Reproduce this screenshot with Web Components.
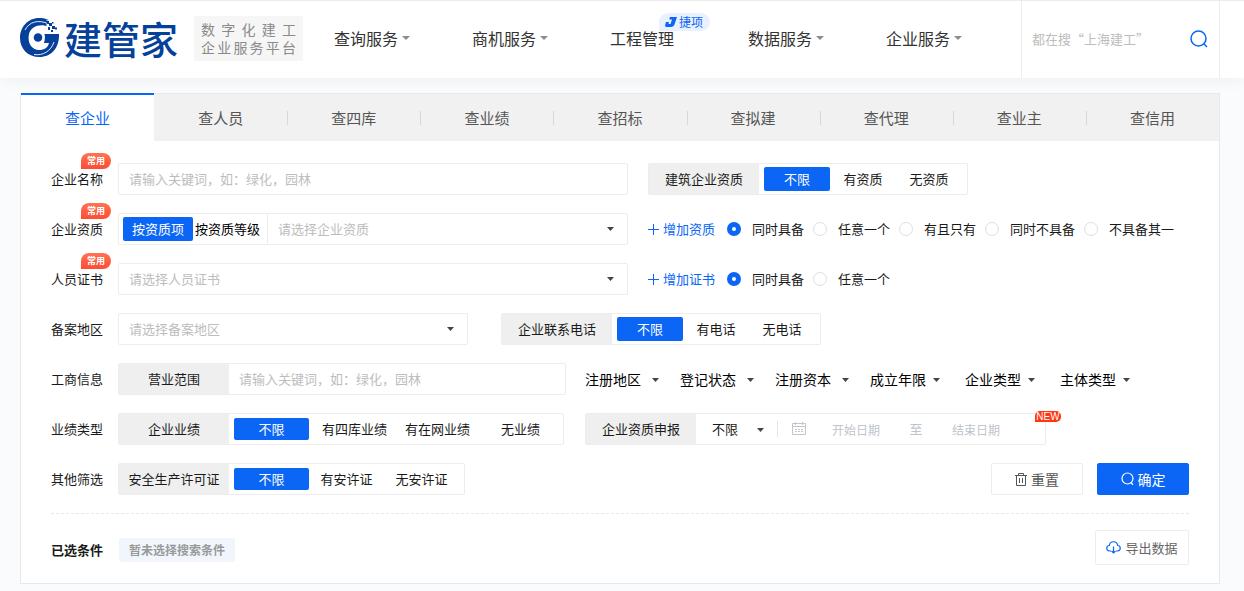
<!DOCTYPE html>
<html lang="zh-CN">
<head>
<meta charset="utf-8">
<title>建管家</title>
<style>
  body { margin: 0; background: #fafbfd; color: #1a1a1a; font: 13px/20px "Noto Sans CJK SC", sans-serif; --blue: #0b66f5; --line: #ededed; --hint: #bdbdbd; }
</style>
</head>
<body>
<site-header></site-header>
<search-panel></search-panel>

<script>
const base = `
  *, *::before { box-sizing: border-box; }
  button, input, select { font: inherit; color: inherit; margin: 0; padding: 0; border: 0; background: none; outline: none; border-radius: 0; }
  select { appearance: none; }
  button { cursor: pointer; }
  a { color: inherit; text-decoration: none; }
  input::placeholder { color: var(--hint); opacity: 1; }
  svg { display: block; flex: none; }
`;
const caret = (w = 7, h = 4) => `<svg width="${w}" height="${h}" viewBox="0 0 8 4" preserveAspectRatio="none" aria-hidden="true"><path d="M0 0H8L4 4Z" fill="currentColor"/></svg>`;

function define(name, css, html) {
  customElements.define(name, class extends HTMLElement {
    constructor() {
      super();
      this.attachShadow({ mode: 'open' });
    }
    connectedCallback() {
      this.shadowRoot.innerHTML = `<style>${base}${css}</style>${typeof html === 'function' ? html(this) : html}`;
    }
  });
}
const list = (el, name) => (el.getAttribute(name) || '').split(' ').filter(Boolean);

/* Brand mark and wordmark */
define('brand-logo', `
  :host { display: block; flex: none; }
  a { display: flex; align-items: center; gap: 4px; color: #05409a; font-size: 38px; line-height: 40px; font-weight: 500; white-space: nowrap; }
`, `
  <a href="#">
    <svg width="40" height="40" viewBox="0 0 40 40" aria-hidden="true">
      <path fill="currentColor" d="M39 16C39.6 30 31 39 19.5 39C8 39 0 31 0 20C0 9 8 0 19 0C25 0 30 2 33 5L29 9C21 5 11 8 9 16C7 25 12 32 19 32C24.5 32 28 29.500 29 25H24C25 22 25.200 19 24.500 16Z"/>
      <circle cx="18" cy="19.500" r="4.300" fill="currentColor"/>
      <path fill="none" stroke="#fff" stroke-width=".9" d="M5 12C9 4 18 1 29 6M14 36.500C23 38 31 33 34 24"/>
      <path fill="#fff" d="M26 2H34V12H27Z"/>
      <path fill="currentColor" d="M25 2L29 3V6H27ZM29 5h3v3h-3zM32 8h3v3h-3zM28 9h2v3h-2zM35 9.500h2v2h-2zM31 12h2v2h-2zM32 4h1.500v1.500h-1.500z"/>
    </svg>
    <span>建管家</span>
  </a>
`);

define('nav-item', `
  :host { display: flex; position: relative; align-items: center; }
  a { display: flex; align-items: center; gap: 4px; font-size: 16px; line-height: 24px; color: #333; }
  svg { color: #8c8c8c; }
  ::slotted(*) { position: absolute; left: 49px; bottom: 44px; }
`, el => `<a href="#">${el.getAttribute('label')}${el.hasAttribute('plain') ? '' : caret(8, 4)}</a><slot></slot>`);

define('product-badge', `
  :host { display: flex; align-items: center; gap: 2px; height: 18px; padding: 0 7px 0 6px; border-radius: 9px 9px 9px 0; background: #e9f1fe; color: var(--blue); font-size: 12px; line-height: 18px; white-space: nowrap; }
`, `
  <svg width="12" height="10" viewBox="0 0 12 10" aria-hidden="true"><path fill="currentColor" d="M5 0H12L9.500 7.500C8.800 9.500 7 10 5 10H1.500C0 10 0 8.500 .3 7.500L1 5H4L3.500 7H5.500L7 2.500H4.200Z"/></svg>
  <slot></slot>
`);

define('site-header', `
  :host { display: block; position: relative; background: #fff; border-top: 1px solid #ebebeb; box-shadow: 0 2px 15px rgba(0,0,0,.05); }
  header { display: flex; align-items: center; margin: 0 24px 0 20px; height: 77px; }
  brand-logo { margin-bottom: 3px; }
  .tagline { flex: none; width: 109px; margin: 0 31px 2px 16px; padding: 4px 7px 5px; background: #f6f6f6; color: #8a8a8a; font-size: 14px; line-height: 18px; text-align-last: justify; }
  nav { flex: 1; min-width: 0; align-self: stretch; display: grid; grid-template-columns: repeat(5, 138px); padding-bottom: 3px; }
  form { display: flex; align-items: center; align-self: stretch; flex: none; width: 199px; padding: 0 10px 2px; border: solid var(--line); border-width: 0 1px; }
  input { flex: 1; min-width: 0; height: 32px; }
  form button { display: flex; color: var(--blue); }
`, `
  <header>
    <brand-logo></brand-logo>
    <div class="tagline"><div>数 字 化 建 工</div><div>企业服务平台</div></div>
    <nav>
      <nav-item label="查询服务"></nav-item>
      <nav-item label="商机服务"></nav-item>
      <nav-item label="工程管理" plain><product-badge>捷项</product-badge></nav-item>
      <nav-item label="数据服务"></nav-item>
      <nav-item label="企业服务"></nav-item>
    </nav>
    <form role="search">
      <input type="text" aria-label="搜索" placeholder="都在搜“上海建工”">
      <button type="button" aria-label="搜索"><svg width="20" height="20" viewBox="0 0 20 20" fill="none" stroke="currentColor" stroke-width="1.500"><circle cx="9.500" cy="9.500" r="7.500"/><path d="M14.800 14.800L18 18"/></svg></button>
    </form>
  </header>
`);

define('tab-bar', `
  :host { display: flex; height: 47px; background: #f1f1f1; }
  button { position: relative; flex: 1; padding-top: 1px; font-size: 15px; color: #555; }
  button[aria-selected=true] { margin-top: -1px; border-top: 2px solid var(--blue); background: #fff; color: var(--blue); padding-top: 0; }
  button + button + button::before { content: ""; position: absolute; left: 0; top: 17px; height: 14px; border-left: 1px solid #d8d8d8; }
`, el => list(el, 'tabs').map((t, i) => `<button type="button" role="tab" aria-selected="${i === 0}">${t}</button>`).join(''));

/* One line of the filter form: a caption, then its controls */
define('filter-row', `
  :host { display: flex; align-items: center; height: 50px; }
  .caption { position: relative; width: 67px; flex: none; }
  .hot { position: absolute; left: 30px; top: -16px; width: 30px; height: 16px; border-radius: 8px 8px 8px 0; background: linear-gradient(#ff7350, #ff4b35); color: #fff; font-size: 9px; line-height: 15px; font-weight: 700; text-align: center; }
`, el => `<div class="caption">${el.getAttribute('label')}${el.hasAttribute('hot') ? '<span class="hot">常用</span>' : ''}</div><slot></slot>`);

const field = `
  :host { display: flex; height: 32px; border: 1px solid var(--line); border-radius: 2px; background: #fff; }
  .tag { display: flex; align-items: center; justify-content: center; width: 110px; flex: none; background: #efefef; }
`;

define('text-field', `${field}
  input { flex: 1; min-width: 0; padding: 0 10px; }
`, el => `${el.hasAttribute('tag') ? `<label class="tag" for="f">${el.getAttribute('tag')}</label>` : ''}<input id="f" type="text" aria-label="关键词" placeholder="${el.getAttribute('hint')}">`);

define('select-field', `${field}
  :host { align-items: center; }
  select { flex: 1; min-width: 0; height: 30px; padding: 0 10px; color: var(--hint); }
  svg { margin-right: 13px; color: #444; }
`, el => `<slot></slot><select aria-label="${el.getAttribute('hint')}"><option>${el.getAttribute('hint')}</option></select>${caret(7, 4)}`);

define('mode-switch', `
  :host { display: flex; align-items: center; height: 30px; padding: 0 5px 0 4px; border-right: 1px solid var(--line); color: #000; }
  button { height: 24px; padding: 0 2px; white-space: nowrap; }
  button[aria-pressed=true] { width: 70px; border-radius: 2px; background: var(--blue); color: #fff; }
`, `<button type="button" aria-pressed="true">按资质项</button><button type="button" aria-pressed="false">按资质等级</button>`);

define('option-group', `${field}
  :host { --w: 66px; --h: 24px; --gap: 0px; }
  :host([wide]) { --w: 75px; --h: 22px; }
  :host([spaced]) { --gap: 8px; }
  .options { display: flex; align-items: center; gap: var(--gap); padding: 0 5px; }
  button { width: var(--w); height: var(--h); border-radius: 2px; white-space: nowrap; }
  button[aria-pressed=true] { background: var(--blue); color: #fff; }
`, el => `<div class="tag">${el.getAttribute('tag')}</div><div class="options">${list(el, 'options').map((o, i) => `<button type="button" aria-pressed="${i === 0}">${o}</button>`).join('')}</div>`);

define('add-link', `
  :host { display: block; margin-right: 12px; }
  button { display: flex; align-items: center; gap: 4px; color: var(--blue); white-space: nowrap; }
`, `<button type="button"><svg width="11" height="11" viewBox="0 0 11 11" stroke="currentColor" aria-hidden="true"><path d="M5.500 0V11M0 5.500H11"/></svg><slot></slot></button>`);

define('radio-set', `
  :host { display: flex; gap: 9px; }
  label { display: flex; align-items: center; gap: 11px; white-space: nowrap; }
  input { appearance: none; width: 14px; height: 14px; border: 1px solid #dcdfe6; border-radius: 50%; background: #fff; }
  input:checked { border: 5px solid var(--blue); }
`, el => list(el, 'options').map((o, i) => `<label><input type="radio" name="r" ${i === 0 ? 'checked' : ''}>${o}</label>`).join(''));

define('menu-select', `
  :host { display: flex; align-items: center; gap: 6px; width: 95px; color: #000; font-size: 14px; }
  :host([spaced]) { gap: 10px; }
  select { width: 57px; height: 22px; }
  svg { margin-top: 2px; color: #444; }
`, el => `<select aria-label="${el.getAttribute('label')}"><option>${el.getAttribute('label')}</option></select>${caret(7, 4)}`);

define('report-filter', `${field}
  :host { position: relative; align-items: center; width: 461px; --hint: #c0c4cc; }
  .tag { height: 30px; }
  select { width: 45px; height: 30px; margin-left: 16px; }
  .caret { color: #444; padding-top: 2px; }
  .sep { height: 16px; margin: 0 14px 0 13px; border-left: 1px solid #e4e4e4; }
  .cal { color: #c0c4cc; }
  input { width: 100px; height: 28px; font-size: 12px; text-align: center; }
  .to { width: 20px; text-align: center; color: #c0c4cc; }
  .new { position: absolute; right: -16px; top: -3px; width: 26px; height: 11px; border-radius: 5px 5px 5px 0; background: #ff3513; color: #fff; font: 10px/11px "Liberation Sans", sans-serif; text-align: center; }
`, `
  <label class="tag" for="s">企业资质申报</label>
  <select id="s"><option>不限</option></select>
  <span class="caret">${caret(7, 4)}</span>
  <span class="sep"></span>
  <svg class="cal" width="14" height="14" viewBox="0 0 14 14" fill="none" stroke="currentColor" aria-hidden="true"><path d="M.5 1.500H13.500V12.500H.5ZM.5 4.500H13.500M3.500 0V3M10.500 0V3M3 7.500H5M6 7.500H8M9 7.500H11M3 9.500H5M6 9.500H8M9 9.500H11"/></svg>
  <input type="text" aria-label="开始日期" placeholder="开始日期">
  <span class="to">至</span>
  <input type="text" aria-label="结束日期" placeholder="结束日期">
  <span class="new">NEW</span>
`);

define('action-button', `
  :host { display: block; }
  button { display: flex; align-items: center; justify-content: center; gap: 4px; width: 92px; height: 32px; border: 1px solid var(--line); border-radius: 2px; background: #fff; color: #555; font-size: 14px; white-space: nowrap; }
  :host([primary]) button { border-color: var(--blue); background: var(--blue); color: #fff; }
  :host([large]) button { width: 94px; height: 35px; font-size: 13px; color: #666; }
`, `<button type="button"><slot name="icon"></slot><slot></slot></button>`);

define('search-panel', `
  :host { display: block; margin: 15px 24px 7px 20px; border: 1px solid #e8e8e8; background: #fff; }
  .body { padding: 13px 30px 18px; }
  .name { flex: 0 1 510px; margin-right: 20px; }
  .region { flex: 0 1 350px; margin-right: 33px; }
  .scope { flex: 0 1 448px; margin-right: 19px; }
  .record { margin-right: 21px; }
  .actions { display: flex; gap: 14px; margin-left: auto; }
  .chosen { display: flex; align-items: center; margin-top: 9px; padding-top: 16px; border-top: 1px dashed #e8e8e8; }
  .chosen b { width: 68px; margin-top: 4px; }
  .chip { margin-top: 4px; padding: 2px 10px; border-radius: 2px; background: #f0f6fb; color: #999; font-size: 12px; font-weight: 700; }
`, `
  <tab-bar role="tablist" tabs="查企业 查人员 查四库 查业绩 查招标 查拟建 查代理 查业主 查信用"></tab-bar>
  <div class="body">
    <filter-row label="企业名称" hot>
      <text-field class="name" hint="请输入关键词，如：绿化，园林"></text-field>
      <option-group tag="建筑企业资质" options="不限 有资质 无资质"></option-group>
    </filter-row>
    <filter-row label="企业资质" hot>
      <select-field class="name" hint="请选择企业资质"><mode-switch></mode-switch></select-field>
      <add-link>增加资质</add-link>
      <radio-set options="同时具备 任意一个 有且只有 同时不具备 不具备其一"></radio-set>
    </filter-row>
    <filter-row label="人员证书" hot>
      <select-field class="name" hint="请选择人员证书"></select-field>
      <add-link>增加证书</add-link>
      <radio-set options="同时具备 任意一个"></radio-set>
    </filter-row>
    <filter-row label="备案地区">
      <select-field class="region" hint="请选择备案地区"></select-field>
      <option-group tag="企业联系电话" options="不限 有电话 无电话"></option-group>
    </filter-row>
    <filter-row label="工商信息">
      <text-field class="scope" tag="营业范围" hint="请输入关键词，如：绿化，园林"></text-field>
      <menu-select label="注册地区" spaced></menu-select>
      <menu-select label="登记状态" spaced></menu-select>
      <menu-select label="注册资本" spaced></menu-select>
      <menu-select label="成立年限"></menu-select>
      <menu-select label="企业类型"></menu-select>
      <menu-select label="主体类型"></menu-select>
    </filter-row>
    <filter-row label="业绩类型">
      <option-group class="record" wide spaced tag="企业业绩" options="不限 有四库业绩 有在网业绩 无业绩"></option-group>
      <report-filter></report-filter>
    </filter-row>
    <filter-row label="其他筛选">
      <option-group wide tag="安全生产许可证" options="不限 有安许证 无安许证"></option-group>
      <div class="actions">
        <action-button><svg slot="icon" width="12" height="13" viewBox="0 0 12 13" fill="none" stroke="currentColor" aria-hidden="true"><path d="M0 2.500H12M1.500 2.500V12.500H10.500V2.500M3.500 2.500V.5H8.500V2.500M4.500 5V10M7.500 5V10"/></svg>重置</action-button>
        <action-button primary><svg slot="icon" width="13" height="14" viewBox="0 0 13 14" fill="none" stroke="currentColor" stroke-width="1.200" aria-hidden="true"><circle cx="6.500" cy="6.500" r="5.500"/><path d="M10 10.500L12 12.800"/></svg>确定</action-button>
      </div>
    </filter-row>
    <div class="chosen">
      <b>已选条件</b>
      <span class="chip">暂未选择搜索条件</span>
      <div class="actions">
        <action-button large><svg slot="icon" width="15" height="13" viewBox="0 0 15 13" fill="none" stroke="#0b66f5" stroke-width="1.200" aria-hidden="true"><path d="M5 10H3.500C-.3 9.500 0 4.800 3.300 4.500C4 -.5 11 -.5 11.700 4.500C15 4.800 15.300 9.500 11.500 10H10M7.500 5.500V12M5.500 10L7.500 12L9.500 10"/></svg>导出数据</action-button>
      </div>
    </div>
  </div>
`);
</script>
</body>
</html>
